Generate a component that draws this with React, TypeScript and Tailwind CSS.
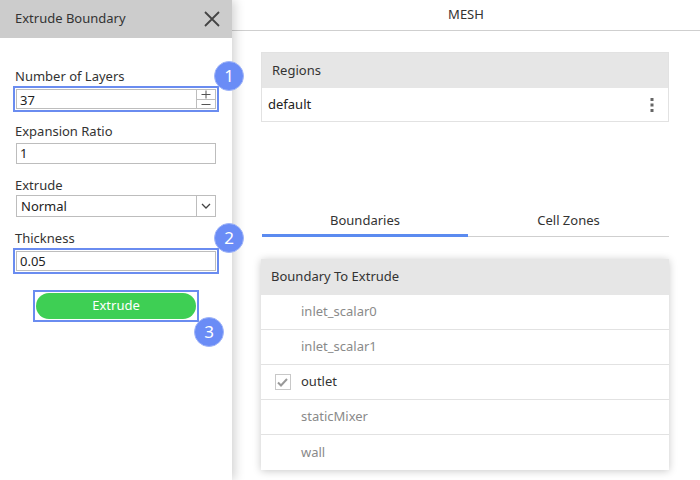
import React from "react";

const font = { fontFamily: '"Noto Sans", "Open Sans", sans-serif' };

function Badge({ n, x, y }: { n: number; x: number; y: number }) {
  return (
    <div
      className="absolute z-30 w-[30px] h-[30px] rounded-full bg-[#6a8cf6] text-white text-[17px] flex items-center justify-center border border-[#9fb4f8]"
      style={{ left: x - 15, top: y - 15 }}
    >
      {n}
    </div>
  );
}

export default function App() {
  const rows = [
    { name: "inlet_scalar0", checked: false },
    { name: "inlet_scalar1", checked: false },
    { name: "outlet", checked: true },
    { name: "staticMixer", checked: false },
    { name: "wall", checked: false },
  ];
  return (
    <div className="relative w-[700px] h-[480px] bg-white flex overflow-hidden text-[#333]" style={font}>
      {/* Left panel */}
      <div className="relative z-20 w-[232px] h-full bg-white shadow-[3px_0_10px_rgba(0,0,0,0.18)] flex flex-col">
        <div className="h-[38px] bg-[#cccccc] flex items-center justify-between pl-[15px] pr-[11px]">
          <span className="text-[13px] text-[#333]">Extrude Boundary</span>
          <svg width="18" height="18" viewBox="0 0 18 18">
            <path d="M2 2 L16 16 M16 2 L2 16" stroke="#444" strokeWidth="1.8" />
          </svg>
        </div>
        <div className="flex flex-col pl-[13px] pt-[29px]">
          <div className="pl-[2px] text-[13px] leading-[18px] h-[18px]">Number of Layers</div>
          <div className="mt-[1px] w-[206px] h-[26px] border-2 border-[#6a8cf0] p-px">
            <div className="h-full border border-[#bdbdbd] flex">
              <div className="flex-1 pl-[3px] text-[13px] leading-[20px] text-[#222]">37</div>
              <div className="w-[19px] border-l border-[#bdbdbd] flex flex-col">
                <div className="flex-1 border-b border-[#bdbdbd] flex items-center justify-center">
                  <svg width="10" height="9" viewBox="0 0 10 9"><path d="M0.5 4.5 H9.5 M5 0.5 V8.5" stroke="#555" strokeWidth="1" /></svg>
                </div>
                <div className="flex-1 flex items-center justify-center">
                  <svg width="10" height="9" viewBox="0 0 10 9"><path d="M0.5 4.5 H9.5" stroke="#555" strokeWidth="1" /></svg>
                </div>
              </div>
            </div>
          </div>

          <div className="mt-[10px] pl-[2px] text-[13px] leading-[18px] h-[18px]">Expansion Ratio</div>
          <div className="mt-[3px] ml-[3px] w-[200px] h-[21px] border border-[#bdbdbd] pl-[3px] text-[13px] leading-[19px] text-[#222]">1</div>

          <div className="mt-[12px] pl-[2px] text-[13px] leading-[18px] h-[18px]">Extrude</div>
          <div className="mt-[1px] ml-[3px] w-[200px] h-[22px] border border-[#bdbdbd] flex">
            <div className="flex-1 pl-[4px] text-[13px] leading-[20px] text-[#222]">Normal</div>
            <div className="w-[19px] border-l border-[#bdbdbd] flex items-center justify-center">
              <svg width="10" height="6" viewBox="0 0 10 6"><path d="M1 1 L5 5 L9 1" stroke="#444" strokeWidth="1.3" fill="none" /></svg>
            </div>
          </div>

          <div className="mt-[12px] pl-[2px] text-[13px] leading-[18px] h-[18px]">Thickness</div>
          <div className="mt-[1px] w-[206px] h-[26px] border-2 border-[#6a8cf0] p-px">
            <div className="h-full border border-[#bdbdbd] pl-[3px] text-[13px] leading-[19px] text-[#222]">0.05</div>
          </div>

          <div className="mt-[16px] ml-[20px] w-[166px] h-[32px] border-2 border-[#6a8cf0] p-px">
            <div className="h-full rounded-full bg-[#3ecf54] text-white text-[13px] flex items-center justify-center">Extrude</div>
          </div>
        </div>
      </div>

      {/* Right panel */}
      <div className="flex-1 flex flex-col">
        <div className="h-[31px] border-b border-[#cfcfcf] flex items-center justify-center text-[13px] text-[#333]">MESH</div>
        <div className="pl-[29px] pr-[31px] pt-[21px] flex flex-col">
          <div className="border border-[#e2e2e2]">
            <div className="h-[35px] bg-[#e6e6e6] pl-[10px] flex items-center text-[13px] text-[#333]">Regions</div>
            <div className="h-[33px] pl-[6px] pr-[14px] flex items-center justify-between text-[13px] text-[#222]">
              <span>default</span>
              <svg width="4" height="16" viewBox="0 0 4 16">
                <rect x="0.5" y="1" width="3" height="3" fill="#666" />
                <rect x="0.5" y="6.5" width="3" height="3" fill="#666" />
                <rect x="0.5" y="12" width="3" height="3" fill="#666" />
              </svg>
            </div>
          </div>

          <div className="mt-[84px] ml-px flex border-b border-[#cfcfcf] h-[31px]">
            <div className="w-[206px] flex items-start justify-center pt-[5px] text-[13px] text-[#333] border-b-[3px] border-[#5b8bf0] -mb-px">Boundaries</div>
            <div className="flex-1 flex items-start justify-center pt-[5px] text-[13px] text-[#333]">Cell Zones</div>
          </div>

          <div className="mt-[22px] bg-white shadow-[0_1px_8px_rgba(0,0,0,0.22)]">
            <div className="h-[36px] bg-[#e6e6e6] pl-[10px] flex items-center text-[13px] text-[#333]">Boundary To Extrude</div>
            {rows.map((r, i) => (
              <div
                key={r.name}
                className={`h-[35px] flex items-center text-[13px] ${i < rows.length - 1 ? "border-b border-[#e2e2e2]" : ""}`}
              >
                <div className="w-[40px] flex justify-center pl-[3px]">
                  {r.checked && (
                    <div className="w-[16px] h-[16px] border border-[#c8c8c8] flex items-center justify-center">
                      <svg width="11" height="9" viewBox="0 0 11 9"><path d="M1 4.5 L4 7.5 L10 1" stroke="#999" strokeWidth="2" fill="none" /></svg>
                    </div>
                  )}
                </div>
                <span className={r.checked ? "text-[#333]" : "text-[#8a8a8a]"}>{r.name}</span>
              </div>
            ))}
          </div>
        </div>
      </div>

      <Badge n={1} x={229} y={76} />
      <Badge n={2} x={229} y={238} />
      <Badge n={3} x={209} y={332} />
    </div>
  );
}
